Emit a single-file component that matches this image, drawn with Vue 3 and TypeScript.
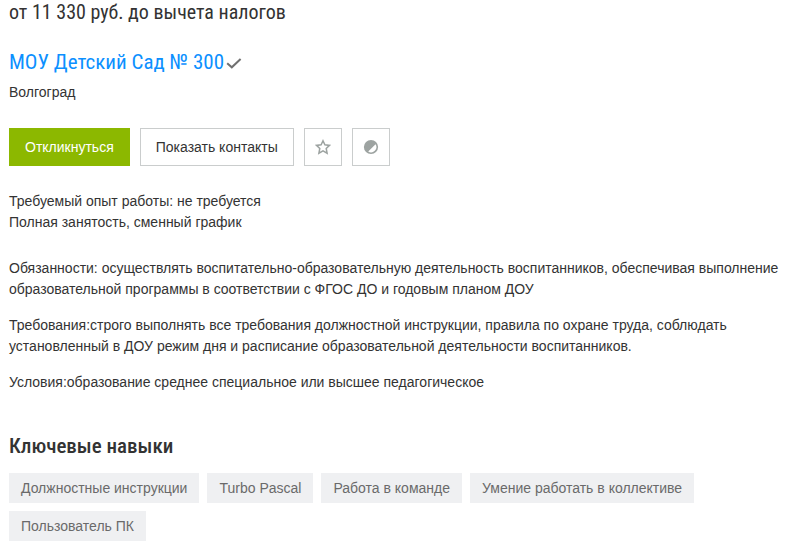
<script setup lang="ts">
import { ref } from 'vue'

const skills: string[] = [
  'Должностные инструкции',
  'Turbo Pascal',
  'Работа в команде',
  'Умение работать в коллективе',
  'Пользователь ПК',
]
const favorite = ref(false)
const hidden = ref(false)
</script>

<template>
  <main class="vacancy">
    <p class="salary">от 11 330 руб. до вычета налогов</p>
    <div class="company">
      <a class="company-name" href="#">МОУ Детский Сад № 300</a>
      <svg class="check" viewBox="0 0 16 14" aria-hidden="true">
        <path d="M1.2 8.2 5.8 12.3 14.6 4" fill="none" stroke="#707070" stroke-width="2" />
      </svg>
    </div>
    <p class="city">Волгоград</p>

    <div class="actions">
      <button class="button primary" type="button">Откликнуться</button>
      <button class="button" type="button">Показать контакты</button>
      <button class="button icon" type="button" aria-label="В избранное" :aria-pressed="favorite" @click="favorite = !favorite">
        <svg viewBox="0 0 16 16" aria-hidden="true">
          <path d="M8 1.8 9.9 5.8 14.5 6.4 11.2 9.5 12.1 14.2 8 11.9 3.9 14.2 4.8 9.5 1.5 6.4 6.1 5.8Z" fill="none" stroke="#9da3a1" stroke-width="1.5" />
        </svg>
      </button>
      <button class="button icon" type="button" aria-label="Скрыть вакансию" :aria-pressed="hidden" @click="hidden = !hidden">
        <svg viewBox="0 0 16 16" aria-hidden="true">
          <circle cx="8" cy="8" r="7.1" fill="#9da3a1" />
          <path d="M12.6 5.2A5.4 5.4 0 0 1 5.2 12.6Z" fill="#fff" />
        </svg>
      </button>
    </div>

    <p class="conditions">Требуемый опыт работы: не требуется<br />Полная занятость, сменный график</p>

    <section class="description">
      <p>Обязанности: осуществлять воспитательно-образовательную деятельность воспитанников, обеспечивая выполнение образовательной программы в соответствии с ФГОС ДО и годовым планом ДОУ</p>
      <p>Требования:строго выполнять все требования должностной инструкции, правила по охране труда, соблюдать установленный в ДОУ режим дня и расписание образовательной деятельности воспитанников.</p>
      <p>Условия:образование среднее специальное или высшее педагогическое</p>
    </section>

    <h2 class="heading">Ключевые навыки</h2>
    <ul class="skills">
      <li v-for="skill in skills" :key="skill">{{ skill }}</li>
    </ul>
  </main>
</template>

<style>
body {
  background: #fff;
}
</style>

<style scoped>
.vacancy {
  padding: 0 9px;
  font: 14px/21px "Liberation Sans", Arial, sans-serif;
  color: #333;
}
p {
  margin: 0;
}
.salary {
  font: 20px/24px "Roboto Condensed", Roboto, sans-serif;
}
.company {
  display: flex;
  align-items: center;
  gap: 2px;
  margin-top: 26px;
  font: 21px/24px "Roboto Condensed", Roboto, sans-serif;
}
.company-name {
  color: #0c90ff;
  text-decoration: none;
}
.check {
  width: 16px;
  height: 14px;
}
.city {
  margin-top: 8px;
}
.actions {
  display: flex;
  flex-wrap: wrap;
  gap: 10px;
  margin-top: 25px;
}
.button {
  display: flex;
  align-items: center;
  justify-content: center;
  height: 38px;
  padding: 0 15px;
  border: 1px solid #cacdcd;
  background: #fff;
  color: #333;
  font: inherit;
  cursor: pointer;
}
.primary {
  border-color: #8cb800;
  background: #8cb800;
  color: #fff;
}
.icon {
  width: 38px;
  padding: 0;
}
.icon svg {
  width: 16px;
  height: 16px;
}
.conditions {
  margin-top: 25px;
}
.description {
  display: flex;
  flex-direction: column;
  gap: 15px;
  margin-top: 25px;
}
.heading {
  margin: 40px 0 0;
  font: 500 21px/26px "Roboto Condensed", Roboto, sans-serif;
}
.skills {
  display: flex;
  flex-wrap: wrap;
  gap: 8px;
  margin: 14px 0 0;
  padding: 0;
  list-style: none;
}
.skills li {
  padding: 0 12px;
  background: #eff0f2;
  color: #6a6a6a;
  line-height: 30px;
}
</style>
